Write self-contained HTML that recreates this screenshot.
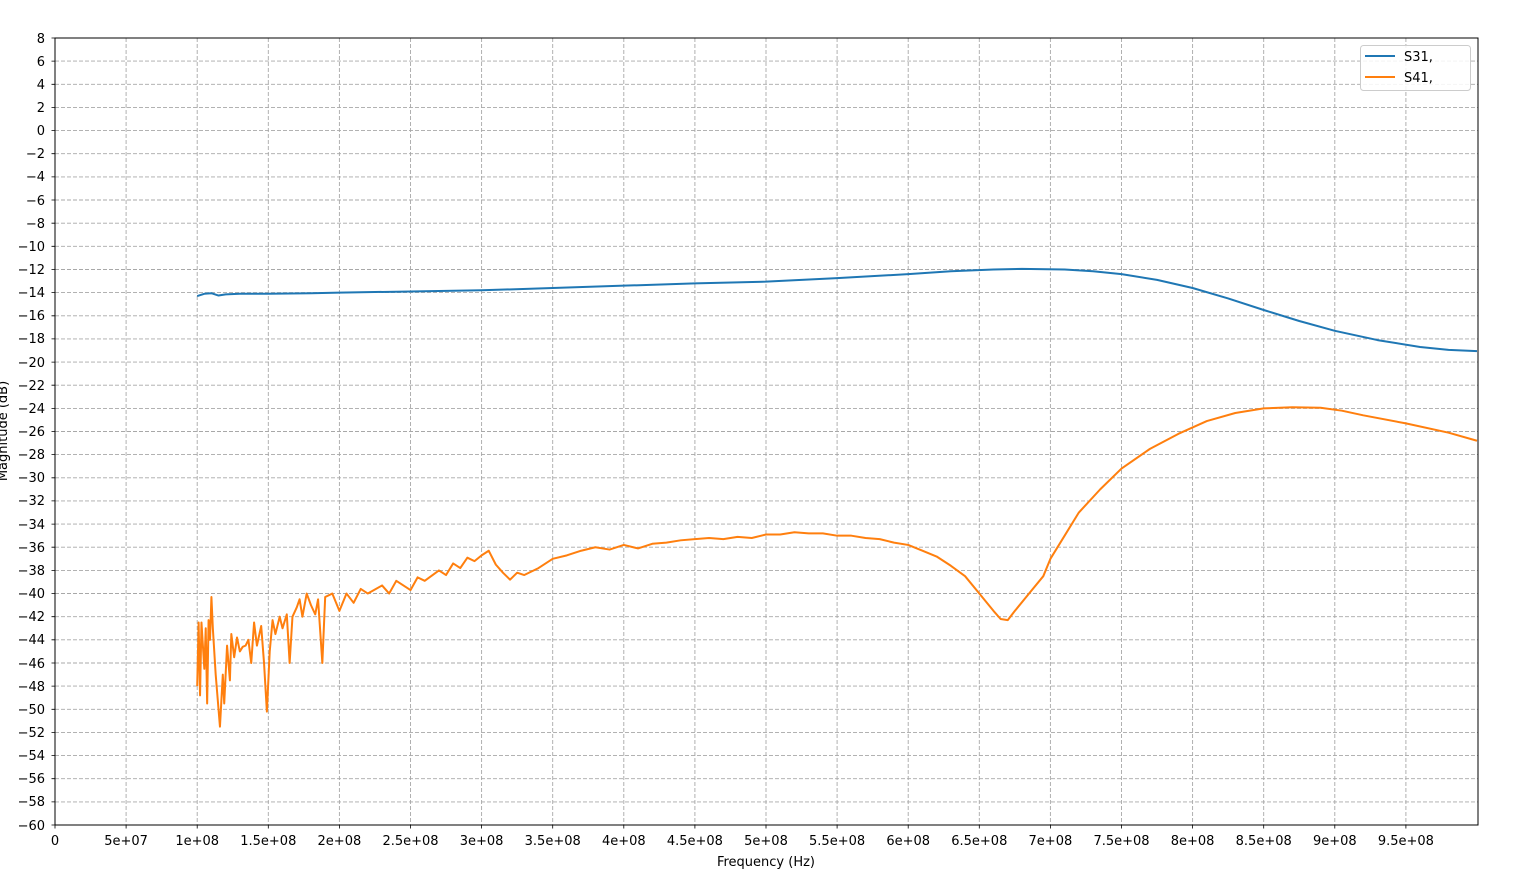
<!DOCTYPE html>
<html><head><meta charset="utf-8"><style>
html,body{margin:0;padding:0;background:#fff;}
svg{display:block;font-family:"DejaVu Sans","Liberation Sans",sans-serif;}
</style></head><body>
<svg width="1532" height="888" viewBox="0 0 1532 888" xmlns="http://www.w3.org/2000/svg">
<rect width="1532" height="888" fill="#fff"/>
<g stroke="#a8a8a8" stroke-width="0.9" stroke-dasharray="4,2" fill="none">
<path d="M126.1 38V825M197.2 38V825M268.3 38V825M339.4 38V825M410.5 38V825M481.6 38V825M552.7 38V825M623.8 38V825M694.9 38V825M766 38V825M837.1 38V825M908.2 38V825M979.3 38V825M1050.4 38V825M1121.5 38V825M1192.6 38V825M1263.7 38V825M1334.8 38V825M1405.9 38V825"/>
<path d="M55 61.1H1478M55 84.3H1478M55 107.4H1478M55 130.6H1478M55 153.7H1478M55 176.9H1478M55 200H1478M55 223.2H1478M55 246.3H1478M55 269.5H1478M55 292.6H1478M55 315.8H1478M55 338.9H1478M55 362.1H1478M55 385.2H1478M55 408.4H1478M55 431.5H1478M55 454.6H1478M55 477.8H1478M55 500.9H1478M55 524.1H1478M55 547.2H1478M55 570.4H1478M55 593.5H1478M55 616.7H1478M55 639.8H1478M55 663H1478M55 686.1H1478M55 709.3H1478M55 732.4H1478M55 755.6H1478M55 778.7H1478M55 801.9H1478"/>
</g>
<g transform="matrix(142.2 0 0 -11.574 55 130.59)" fill="none" stroke-linejoin="round">
<polyline vector-effect="non-scaling-stroke" stroke="#1f77b4" stroke-width="2" points="1,-14.3 1.05,-14.1 1.1,-14.05 1.15,-14.25 1.2,-14.15 1.3,-14.1 1.5,-14.1 1.8,-14.05 2,-14 2.5,-13.9 3,-13.8 3.5,-13.6 4,-13.4 4.5,-13.2 5,-13.05 5.5,-12.75 6,-12.4 6.3,-12.15 6.6,-12 6.8,-11.95 7.1,-12 7.3,-12.15 7.5,-12.4 7.75,-12.9 8,-13.6 8.25,-14.5 8.5,-15.5 8.75,-16.45 9,-17.3 9.3,-18.1 9.6,-18.7 9.8,-18.95 10,-19.05"/>
<polyline vector-effect="non-scaling-stroke" stroke="#ff7f0e" stroke-width="2" points="1.0,-48 1.01,-42.5 1.02,-48.8 1.03,-42.5 1.05,-46.5 1.06,-43 1.07,-49.5 1.08,-42.3 1.09,-44 1.1,-40.3 1.11,-43 1.13,-47 1.16,-51.5 1.18,-47 1.19,-49.5 1.21,-44.5 1.23,-47.5 1.24,-43.5 1.26,-45.5 1.28,-43.8 1.3,-45 1.32,-44.6 1.34,-44.5 1.36,-44 1.38,-46 1.4,-42.5 1.42,-44.5 1.45,-42.8 1.47,-46 1.49,-50.2 1.51,-45 1.53,-42.3 1.55,-43.5 1.58,-42 1.6,-43 1.63,-41.8 1.65,-46 1.67,-42 1.7,-41.2 1.72,-40.5 1.74,-42 1.77,-40 1.8,-41 1.83,-41.8 1.85,-40.5 1.88,-46 1.9,-40.3 1.95,-40 2.0,-41.5 2.05,-40 2.1,-40.8 2.15,-39.6 2.2,-40 2.3,-39.3 2.35,-40 2.4,-38.9 2.5,-39.7 2.55,-38.6 2.6,-38.9 2.7,-38 2.75,-38.4 2.8,-37.4 2.85,-37.8 2.9,-36.9 2.95,-37.2 3.0,-36.7 3.05,-36.3 3.1,-37.5 3.15,-38.2 3.2,-38.8 3.25,-38.2 3.3,-38.4 3.4,-37.8 3.5,-37 3.6,-36.7 3.7,-36.3 3.8,-36 3.9,-36.2 4,-35.8 4.1,-36.1 4.2,-35.7 4.3,-35.6 4.4,-35.4 4.5,-35.3 4.6,-35.2 4.7,-35.3 4.8,-35.1 4.9,-35.2 5,-34.9 5.1,-34.9 5.2,-34.7 5.3,-34.8 5.4,-34.8 5.5,-35 5.6,-35 5.7,-35.2 5.8,-35.3 5.9,-35.6 6,-35.8 6.1,-36.3 6.2,-36.8 6.3,-37.6 6.4,-38.5 6.5,-40 6.6,-41.5 6.65,-42.2 6.7,-42.3 6.75,-41.5 6.85,-40 6.95,-38.5 7,-37 7.1,-35 7.2,-33 7.35,-31 7.5,-29.2 7.7,-27.5 7.9,-26.2 8.1,-25.1 8.3,-24.4 8.5,-24 8.7,-23.9 8.9,-23.95 9.05,-24.2 9.2,-24.6 9.5,-25.3 9.8,-26.1 10,-26.8"/>
</g>
<rect x="55" y="38" width="1423" height="787" fill="none" stroke="#000" stroke-width="1"/>
<g stroke="#000" stroke-width="0.8">
<path d="M51.5 38H55M51.5 61.1H55M51.5 84.3H55M51.5 107.4H55M51.5 130.6H55M51.5 153.7H55M51.5 176.9H55M51.5 200H55M51.5 223.2H55M51.5 246.3H55M51.5 269.5H55M51.5 292.6H55M51.5 315.8H55M51.5 338.9H55M51.5 362.1H55M51.5 385.2H55M51.5 408.4H55M51.5 431.5H55M51.5 454.6H55M51.5 477.8H55M51.5 500.9H55M51.5 524.1H55M51.5 547.2H55M51.5 570.4H55M51.5 593.5H55M51.5 616.7H55M51.5 639.8H55M51.5 663H55M51.5 686.1H55M51.5 709.3H55M51.5 732.4H55M51.5 755.6H55M51.5 778.7H55M51.5 801.9H55M51.5 825H55"/>
<path d="M55 825V828.5M126.1 825V828.5M197.2 825V828.5M268.3 825V828.5M339.4 825V828.5M410.5 825V828.5M481.6 825V828.5M552.7 825V828.5M623.8 825V828.5M694.9 825V828.5M766 825V828.5M837.1 825V828.5M908.2 825V828.5M979.3 825V828.5M1050.4 825V828.5M1121.5 825V828.5M1192.6 825V828.5M1263.7 825V828.5M1334.8 825V828.5M1405.9 825V828.5"/>
</g>
<g font-size="13" text-anchor="end" fill="#000">
<text x="45" y="43">8</text><text x="45" y="66">6</text><text x="45" y="89">4</text><text x="45" y="112">2</text><text x="45" y="135">0</text>
<text x="45" y="158">−2</text><text x="45" y="181">−4</text><text x="45" y="205">−6</text><text x="45" y="228">−8</text><text x="45" y="251">−10</text>
<text x="45" y="274">−12</text><text x="45" y="297">−14</text><text x="45" y="320">−16</text><text x="45" y="343">−18</text><text x="45" y="367">−20</text>
<text x="45" y="390">−22</text><text x="45" y="413">−24</text><text x="45" y="436">−26</text><text x="45" y="459">−28</text><text x="45" y="482">−30</text>
<text x="45" y="505">−32</text><text x="45" y="529">−34</text><text x="45" y="552">−36</text><text x="45" y="575">−38</text><text x="45" y="598">−40</text>
<text x="45" y="621">−42</text><text x="45" y="644">−44</text><text x="45" y="668">−46</text><text x="45" y="691">−48</text><text x="45" y="714">−50</text>
<text x="45" y="737">−52</text><text x="45" y="760">−54</text><text x="45" y="783">−56</text><text x="45" y="806">−58</text><text x="45" y="830">−60</text>
</g>
<g font-size="13" text-anchor="middle" fill="#000">
<text x="55" y="845">0</text><text x="126.1" y="845">5e+07</text><text x="197.2" y="845">1e+08</text><text x="268.3" y="845">1.5e+08</text>
<text x="339.4" y="845">2e+08</text><text x="410.5" y="845">2.5e+08</text><text x="481.6" y="845">3e+08</text><text x="552.7" y="845">3.5e+08</text>
<text x="623.8" y="845">4e+08</text><text x="694.9" y="845">4.5e+08</text><text x="766" y="845">5e+08</text><text x="837.1" y="845">5.5e+08</text>
<text x="908.2" y="845">6e+08</text><text x="979.3" y="845">6.5e+08</text><text x="1050.4" y="845">7e+08</text><text x="1121.5" y="845">7.5e+08</text>
<text x="1192.6" y="845">8e+08</text><text x="1263.7" y="845">8.5e+08</text><text x="1334.8" y="845">9e+08</text><text x="1405.9" y="845">9.5e+08</text>
<text x="766" y="866">Frequency (Hz)</text>
<text transform="translate(7,431) rotate(-90)">Magnitude (dB)</text>
</g>
<rect x="1360.5" y="45.5" width="110" height="45" rx="3" fill="#fff" fill-opacity="0.85" stroke="#ccc"/>
<path d="M1365 56H1395" stroke="#1f77b4" stroke-width="2"/>
<path d="M1365 77H1395" stroke="#ff7f0e" stroke-width="2"/>
<text x="1404" y="61" font-size="13">S31,</text>
<text x="1404" y="82" font-size="13">S41,</text>
</svg>
</body></html>
